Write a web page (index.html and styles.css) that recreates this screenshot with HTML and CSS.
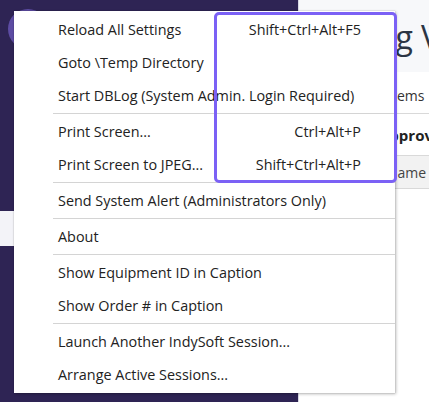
FILE: index.html
```html
<!DOCTYPE html>
<html>
<head>
<meta charset="utf-8">
<link rel="stylesheet" href="styles.css">
</head>
<body>
<div class="app">
  <aside class="sidebar">
    <div class="avatar"></div>
    <div class="nav-spacer"></div>
    <div class="nav-active"></div>
  </aside>
  <main class="main">
    <header class="page-head"><h1 class="title">Working View</h1></header>
    <div class="tabs"><span class="tab">Items</span></div>
    <div class="section"><span class="section-text">Approvals</span></div>
    <div class="thead"><span class="th">Name</span></div>
  </main>
</div>

<div class="menu">
  <div class="item"><span class="label">Reload All Settings</span><span class="key">Shift+Ctrl+Alt+F5</span></div>
  <div class="item"><span class="label">Goto \Temp Directory</span></div>
  <div class="item"><span class="label">Start DBLog (System Admin. Login Required)</span></div>
  <div class="sep"></div>
  <div class="item"><span class="label">Print Screen...</span><span class="key">Ctrl+Alt+P</span></div>
  <div class="item"><span class="label">Print Screen to JPEG...</span><span class="key">Shift+Ctrl+Alt+P</span></div>
  <div class="sep"></div>
  <div class="item"><span class="label">Send System Alert (Administrators Only)</span></div>
  <div class="sep"></div>
  <div class="item"><span class="label">About</span></div>
  <div class="sep"></div>
  <div class="item"><span class="label">Show Equipment ID in Caption</span></div>
  <div class="item"><span class="label">Show Order # in Caption</span></div>
  <div class="sep"></div>
  <div class="item"><span class="label">Launch Another IndySoft Session...</span></div>
  <div class="item"><span class="label">Arrange Active Sessions...</span></div>
</div>

<div class="highlight"></div>
</body>
</html>
```

FILE: styles.css
```css
html, body {
  margin: 0;
  padding: 0;
}
body {
  width: 429px;
  height: 402px;
  overflow: hidden;
  font-family: "Open Sans", "Noto Sans", sans-serif;
  position: relative;
}
.app {
  display: flex;
  height: 402px;
}
.sidebar {
  width: 298px;
  flex: none;
  background: #2e2454;
  display: flex;
  flex-direction: column;
  border-right: 1px solid #d8d8e4;
}
.avatar {
  width: 40px;
  height: 40px;
  border-radius: 50%;
  background: #5d4ca3;
  margin: 9px 0 0 8px;
}
.nav-spacer {
  height: 162px;
}
.nav-active {
  height: 35px;
  background: #f3f3f8;
}
.main {
  flex: 1;
  min-width: 0;
  background: #fff;
  display: flex;
  flex-direction: column;
  overflow: hidden;
}
.page-head {
  height: 72px;
  background: #f7f8fa;
  display: flex;
  align-items: center;
}
.title {
  margin: 0 0 0 -10px;
  font-size: 32px;
  font-weight: 400;
  color: #2b3544;
  white-space: nowrap;
}
.tabs {
  height: 41px;
  border-bottom: 1px solid #d9d9d9;
  display: flex;
  align-items: center;
  font-size: 14px;
  color: #333;
  white-space: nowrap;
}
.tab {
  margin-left: 89px;
  padding-top: 6px;
}
.section {
  height: 41px;
  border-bottom: 1px solid #d9d9d9;
  display: flex;
  align-items: center;
  font-size: 15px;
  font-weight: 700;
  color: #222;
  white-space: nowrap;
}
.section-text {
  margin-left: 80px;
}
.thead {
  height: 32px;
  background: #f2f2f2;
  border-bottom: 1px solid #d9d9d9;
  display: flex;
  align-items: center;
  font-size: 14px;
  color: #444;
  white-space: nowrap;
}
.th {
  margin-left: 88px;
}

.menu {
  position: absolute;
  left: 14px;
  top: 11px;
  width: 381px;
  height: 382px;
  background: #fff;
  box-shadow: 1px 1px 3px rgba(0,0,0,0.28), 0 0 1px rgba(0,0,0,0.25);
  box-sizing: border-box;
  padding-top: 2px;
  display: flex;
  flex-direction: column;
  font-size: 14.4px;
  color: #222;
}
.item {
  height: 33px;
  display: flex;
  align-items: center;
  justify-content: space-between;
  padding: 0 34px 0 44px;
  white-space: nowrap;
}
.sep {
  height: 1px;
  background: #d4d4d4;
  margin: 1px 0 1px 39px;
}

.highlight {
  position: absolute;
  left: 214px;
  top: 12px;
  width: 183px;
  height: 171px;
  box-sizing: border-box;
  border: 3px solid #7b61f5;
  border-radius: 5px;
}
```
